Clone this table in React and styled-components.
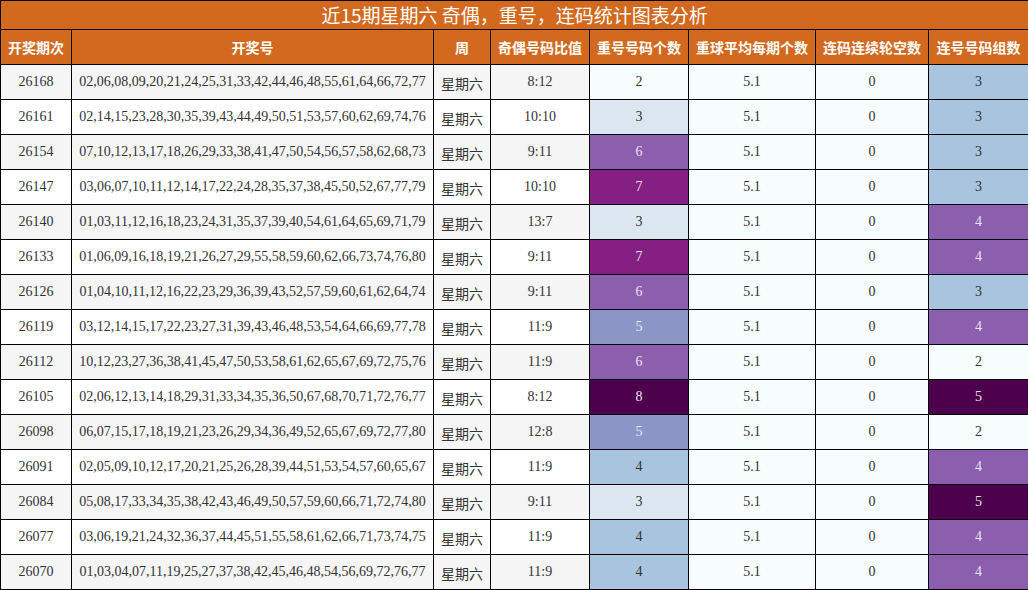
import React from "react";
import styled, { createGlobalStyle } from "styled-components";

const Global = createGlobalStyle`
  html, body { margin: 0; padding: 0; background: #fff; }
  body { font-family: "Liberation Serif", "Noto Sans CJK SC", serif; }
`;

const Table = styled.table`
  width: 1028px;
  border-collapse: collapse;
  table-layout: fixed;
  font-family: "Liberation Serif", "Noto Sans CJK SC", serif;
  font-size: 14px;
  color: #333;
`;

const TitleCell = styled.th`
  height: 28px;
  padding: 0;
  border: 1px solid #000;
  background: #d2691e;
  color: #fff;
  font-family: "Noto Sans CJK SC", sans-serif;
  font-weight: normal;
  font-size: 19px;
  line-height: 28px;
  text-align: center;
`;

const HeadCell = styled.th`
  height: 34px;
  padding: 0;
  border: 1px solid #000;
  background: #d2691e;
  color: #fff;
  font-family: "Noto Sans CJK SC", sans-serif;
  font-weight: bold;
  font-size: 14px;
  line-height: 20px;
  text-align: center;
  white-space: nowrap;
`;

const Row = styled.tr`
  background: ${(p) => (p.$odd ? "#f5f5f5" : "#ffffff")};
`;

const Cell = styled.td`
  height: 34px;
  padding: 0;
  border: 1px solid #000;
  line-height: 20px;
  text-align: center;
  white-space: nowrap;
  overflow: hidden;
  background: ${(p) => p.$bg || "transparent"};
  color: ${(p) => (p.$light ? "#e8e4ef" : "#333")};
`;

const WeekCell = styled(Cell)`
  height: 32px;
  padding-top: 2px;
  font-family: "Noto Sans CJK SC", sans-serif;
`;

const palette = {
  2: ["#f7fcfd", false],
  3: ["#dbe6f1", false],
  4: ["#a8c4df", false],
  5: ["#8c96c6", true],
  6: ["#8c5fae", true],
  7: ["#861f84", true],
  8: ["#4d004b", true],
};

const linkPalette = {
  2: ["#f7fcfd", false],
  3: ["#a8c4df", false],
  4: ["#8c5fae", true],
  5: ["#4d004b", true],
};

const data = [
  ["26168", "02,06,08,09,20,21,24,25,31,33,42,44,46,48,55,61,64,66,72,77", "8:12", 2, 3],
  ["26161", "02,14,15,23,28,30,35,39,43,44,49,50,51,53,57,60,62,69,74,76", "10:10", 3, 3],
  ["26154", "07,10,12,13,17,18,26,29,33,38,41,47,50,54,56,57,58,62,68,73", "9:11", 6, 3],
  ["26147", "03,06,07,10,11,12,14,17,22,24,28,35,37,38,45,50,52,67,77,79", "10:10", 7, 3],
  ["26140", "01,03,11,12,16,18,23,24,31,35,37,39,40,54,61,64,65,69,71,79", "13:7", 3, 4],
  ["26133", "01,06,09,16,18,19,21,26,27,29,55,58,59,60,62,66,73,74,76,80", "9:11", 7, 4],
  ["26126", "01,04,10,11,12,16,22,23,29,36,39,43,52,57,59,60,61,62,64,74", "9:11", 6, 3],
  ["26119", "03,12,14,15,17,22,23,27,31,39,43,46,48,53,54,64,66,69,77,78", "11:9", 5, 4],
  ["26112", "10,12,23,27,36,38,41,45,47,50,53,58,61,62,65,67,69,72,75,76", "11:9", 6, 2],
  ["26105", "02,06,12,13,14,18,29,31,33,34,35,36,50,67,68,70,71,72,76,77", "8:12", 8, 5],
  ["26098", "06,07,15,17,18,19,21,23,26,29,34,36,49,52,65,67,69,72,77,80", "12:8", 5, 2],
  ["26091", "02,05,09,10,12,17,20,21,25,26,28,39,44,51,53,54,57,60,65,67", "11:9", 4, 4],
  ["26084", "05,08,17,33,34,35,38,42,43,46,49,50,57,59,60,66,71,72,74,80", "9:11", 3, 5],
  ["26077", "03,06,19,21,24,32,36,37,44,45,51,55,58,61,62,66,71,73,74,75", "11:9", 4, 4],
  ["26070", "01,03,04,07,11,19,25,27,37,38,42,45,46,48,54,56,69,72,76,77", "11:9", 4, 4],
];

const widths = [71, 362, 57, 99, 99, 127, 113, 100];
const headers = ["开奖期次", "开奖号", "周", "奇偶号码比值", "重号号码个数", "重球平均每期个数", "连码连续轮空数", "连号号码组数"];

export default function App() {
  return (
    <>
      <Global />
      <Table>
        <colgroup>
          {widths.map((w, i) => (
            <col key={i} style={{ width: w }} />
          ))}
        </colgroup>
        <thead>
          <tr>
            <TitleCell colSpan={8}>近15期星期六 奇偶，重号，连码统计图表分析</TitleCell>
          </tr>
          <tr>
            {headers.map((h) => (
              <HeadCell key={h}>{h}</HeadCell>
            ))}
          </tr>
        </thead>
        <tbody>
          {data.map(([issue, nums, ratio, rep, link], i) => {
            const [rbg, rl] = palette[rep];
            const [lbg, ll] = linkPalette[link];
            return (
              <Row key={issue} $odd={i % 2 === 0}>
                <Cell>{issue}</Cell>
                <Cell>{nums}</Cell>
                <WeekCell>星期六</WeekCell>
                <Cell>{ratio}</Cell>
                <Cell $bg={rbg} $light={rl}>{rep}</Cell>
                <Cell $bg="#f7fcfd">5.1</Cell>
                <Cell $bg="#f7fcfd">0</Cell>
                <Cell $bg={lbg} $light={ll}>{link}</Cell>
              </Row>
            );
          })}
        </tbody>
      </Table>
    </>
  );
}
